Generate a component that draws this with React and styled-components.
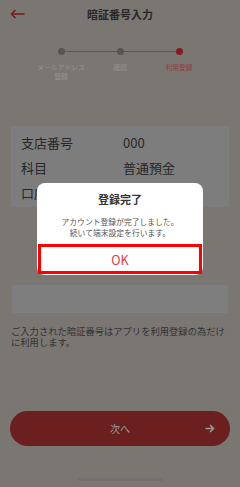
import React from "react";
import styled, { createGlobalStyle } from "styled-components";

const GlobalStyle = createGlobalStyle`
  html, body {
    margin: 0;
    padding: 0;
  }
  body {
    font-family: "Noto Sans CJK JP", "Noto Sans", sans-serif;
    background: #cbc6be;
  }
  * {
    box-sizing: border-box;
  }
`;

const steps = [
  { label: "メールアドレス\n登録", active: false },
  { label: "確認", active: false },
  { label: "利用登録", active: true },
];

const accountRows = [
  { label: "支店番号", value: "000" },
  { label: "科目", value: "普通預金" },
  { label: "口座番号", value: "1234567" },
];

function App() {
  return (
    <>
      <GlobalStyle />
      <Screen>
        <Header>
          <BackButton aria-label="戻る">
            <svg width="15" height="10" viewBox="0 0 15 10">
              <path d="M14.5 5H1.5M5.5 1L1.5 5l4 4" fill="none" stroke="#d02a32" strokeWidth="1.6" />
            </svg>
          </BackButton>
          <Title>暗証番号入力</Title>
        </Header>

        <Stepper>
          <DotRow>
            {steps.map((s, i) => (
              <React.Fragment key={s.label}>
                {i > 0 && <StepLine />}
                <Dot $active={s.active} />
              </React.Fragment>
            ))}
          </DotRow>
          <LabelRow>
            {steps.map((s) => (
              <StepLabel key={s.label} $active={s.active}>{s.label}</StepLabel>
            ))}
          </LabelRow>
        </Stepper>

        <InfoCard>
          {accountRows.map((r) => (
            <InfoRow key={r.label}>
              <span>{r.label}</span>
              <span>{r.value}</span>
            </InfoRow>
          ))}
        </InfoCard>

        <PinInput type="password" />

        <Note>ご入力された暗証番号はアプリを利用登録の為だけに利用します。</Note>

        <NextButton>
          <span>次へ</span>
          <svg width="10" height="9" viewBox="0 0 10 9">
            <path d="M0.5 4.5h8M5 1l3.5 3.5L5 8" fill="none" stroke="#ffffff" strokeWidth="1.5" />
          </svg>
        </NextButton>

        <HomeBar />
      </Screen>

      <Overlay>
        <Dialog>
          <DialogTitle>登録完了</DialogTitle>
          <DialogText>
            アカウント登録が完了しました。
            <br />
            続いて端末設定を行います。
          </DialogText>
          <OkButton>OK</OkButton>
        </Dialog>
      </Overlay>
    </>
  );
}

const Screen = styled.div`
  width: 240px;
  height: 487px;
  display: flex;
  flex-direction: column;
  background: #cbc6be;
  overflow: hidden;
`;

const Header = styled.header`
  height: 28px;
  display: grid;
  grid-template-columns: 40px 1fr 40px;
  align-items: center;
`;

const BackButton = styled.button`
  border: none;
  background: none;
  padding: 0 0 0 10px;
  display: flex;
  align-items: center;
`;

const Title = styled.h1`
  margin: 0;
  text-align: center;
  font-size: 11px;
  font-weight: 700;
  color: #444;
`;

const Stepper = styled.div`
  width: 177px;
  margin: 19.5px auto 0;
`;

const DotRow = styled.div`
  display: flex;
  align-items: center;
  padding: 0 26px;
  height: 7px;
`;

const Dot = styled.span`
  width: 7px;
  height: 7px;
  border-radius: 50%;
  flex: none;
  background: ${(p) => (p.$active ? "#e02b34" : "#938c82")};
`;

const StepLine = styled.span`
  flex: 1;
  height: 1px;
  background: #978f86;
`;

const LabelRow = styled.div`
  display: grid;
  grid-template-columns: repeat(3, 1fr);
  margin-top: 8px;
`;

const StepLabel = styled.span`
  text-align: center;
  white-space: pre-line;
  font-size: 6.8px;
  line-height: 9px;
  color: ${(p) => (p.$active ? "#f06868" : "#f4efe8")};
`;

const InfoCard = styled.section`
  margin: 45.5px 11px 0;
  padding: 3.5px 10px 2.5px;
  background: #d0d0d0;
`;

const InfoRow = styled.div`
  display: grid;
  grid-template-columns: 102px 1fr;
  height: 25px;
  align-items: center;
  font-size: 13px;
  color: #444;
`;

const PinInput = styled.input`
  margin: 77px 11px 0;
  height: 30px;
  border: 1px solid #c6c6c6;
  border-radius: 2px;
  background: #d2d2d2;
`;

const Note = styled.p`
  margin: 11.5px 11px 0;
  font-size: 9.3px;
  line-height: 11px;
  color: #555;
`;

const NextButton = styled.button`
  margin: 63.5px 10px 0;
  height: 35px;
  border: none;
  border-radius: 18px;
  background: #b23434;
  color: #fff;
  font-family: inherit;
  font-size: 10px;
  display: grid;
  grid-template-columns: 1fr auto 1fr;
  align-items: center;
  padding: 0 15px;

  span {
    grid-column: 2;
  }

  svg {
    justify-self: end;
  }
`;

const HomeBar = styled.div`
  width: 85px;
  height: 3px;
  border-radius: 2px;
  background: #bbbbbb;
  margin: 31.5px auto 0;
`;

const Overlay = styled.div`
  position: fixed;
  inset: 0;
  width: 240px;
  height: 487px;
  background: rgba(0, 0, 0, 0.4);
  display: flex;
  justify-content: center;
  align-items: flex-start;
  padding-top: 183px;
`;

const Dialog = styled.div`
  width: 166px;
  background: #fff;
  border-radius: 8px;
  padding: 8px 1px 1px;
  display: flex;
  flex-direction: column;
  align-items: stretch;
`;

const DialogTitle = styled.h2`
  margin: 0;
  font-size: 11px;
  line-height: 16px;
  font-weight: 700;
  text-align: center;
  color: #333;
`;

const DialogText = styled.p`
  margin: 8.5px 0 6.5px;
  font-size: 7.8px;
  line-height: 11px;
  text-align: center;
  color: #555;
`;

const OkButton = styled.button`
  height: 30px;
  border: 3px solid #ff0000;
  background: #fff;
  color: #e8383e;
  font-family: inherit;
  font-size: 12.5px;
  display: flex;
  align-items: center;
  justify-content: center;
`;

export default App;
